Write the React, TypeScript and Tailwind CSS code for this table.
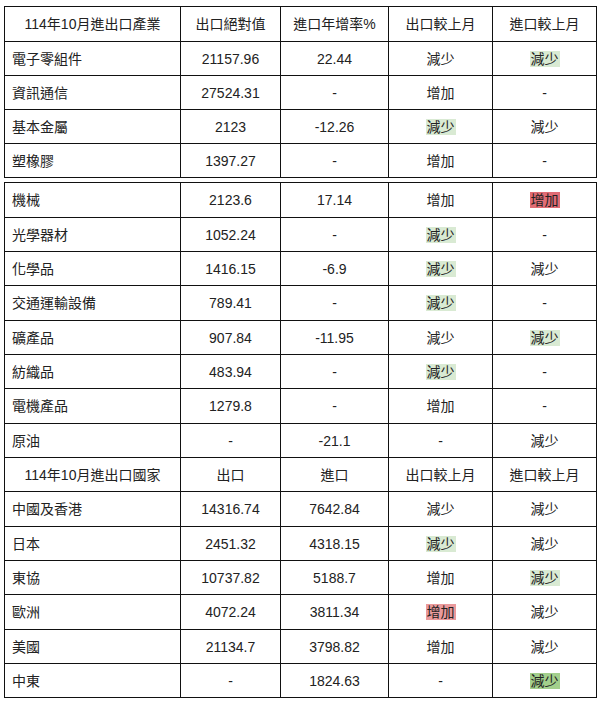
import React from "react";

type Hl = "g" | "G" | "r" | "R" | undefined;
type Row = { cells: string[]; hl?: (Hl)[]; header?: boolean; h?: number };

const t1: Row[] = [
  { cells: ["114年10月進出口產業", "出口絕對值", "進口年增率%", "出口較上月", "進口較上月"], header: true, h: 35 },
  { cells: ["電子零組件", "21157.96", "22.44", "減少", "減少"], hl: [, , , , "g"] },
  { cells: ["資訊通信", "27524.31", "-", "增加", "-"] },
  { cells: ["基本金屬", "2123", "-12.26", "減少", "減少"], hl: [, , , "g"] },
  { cells: ["塑橡膠", "1397.27", "-", "增加", "-"] },
];

const t2: Row[] = [
  { cells: ["機械", "2123.6", "17.14", "增加", "增加"], hl: [, , , , "R"], h: 35 },
  { cells: ["光學器材", "1052.24", "-", "減少", "-"], hl: [, , , "g"] },
  { cells: ["化學品", "1416.15", "-6.9", "減少", "減少"], hl: [, , , "g"] },
  { cells: ["交通運輸設備", "789.41", "-", "減少", "-"], hl: [, , , "g"], h: 35 },
  { cells: ["礦產品", "907.84", "-11.95", "減少", "減少"], hl: [, , , , "g"] },
  { cells: ["紡織品", "483.94", "-", "減少", "-"], hl: [, , , "g"] },
  { cells: ["電機產品", "1279.8", "-", "增加", "-"], h: 35 },
  { cells: ["原油", "-", "-21.1", "-", "減少"] },
  { cells: ["114年10月進出口國家", "出口", "進口", "出口較上月", "進口較上月"], header: true },
  { cells: ["中國及香港", "14316.74", "7642.84", "減少", "減少"], h: 35 },
  { cells: ["日本", "2451.32", "4318.15", "減少", "減少"], hl: [, , , "g"] },
  { cells: ["東協", "10737.82", "5188.7", "增加", "減少"], hl: [, , , , "g"] },
  { cells: ["歐洲", "4072.24", "3811.34", "增加", "減少"], hl: [, , , "r"], h: 35 },
  { cells: ["美國", "21134.7", "3798.82", "增加", "減少"] },
  { cells: ["中東", "-", "1824.63", "-", "減少"], hl: [, , , , "G"] },
];

const hlClass: Record<string, string> = {
  g: "bg-[#d9ead3]",
  G: "bg-[#a3cf8c]",
  r: "bg-[#ea9a9c]",
  R: "bg-[#e06c74]",
};

function Table({ rows, className }: { rows: Row[]; className?: string }) {
  return (
    <table className={"border-collapse table-fixed w-[592px] " + (className ?? "")}>
      <colgroup>
        <col className="w-[176px]" />
        <col className="w-[100px]" />
        <col className="w-[108px]" />
        <col className="w-[104px]" />
        <col className="w-[104px]" />
      </colgroup>
      <tbody>
        {rows.map((r, i) => (
          <tr key={i} className={r.h === 35 ? "h-[35px]" : "h-[34px]"}>
            {r.cells.map((c, j) => {
              const hl = r.hl?.[j];
              const left = j === 0 && !r.header;
              return (
                <td
                  key={j}
                  className={
                    "border border-[#111] p-0 align-middle whitespace-nowrap " +
                    (left ? "text-left pl-[7px]" : "text-center")
                  }
                >
                  {hl ? <span className={hlClass[hl] + " px-[1px]"}>{c}</span> : c}
                </td>
              );
            })}
          </tr>
        ))}
      </tbody>
    </table>
  );
}

export default function App() {
  return (
    <div
      className="bg-white w-[603px] h-[704px] pl-[4px] pt-[6px] text-[14px] leading-[18px] text-[#222]"
      style={{ fontFamily: '"Liberation Sans", Arial, "Noto Sans CJK TC", sans-serif' }}
    >
      <Table rows={t1} />
      <Table rows={t2} className="mt-[4px]" />
    </div>
  );
}
